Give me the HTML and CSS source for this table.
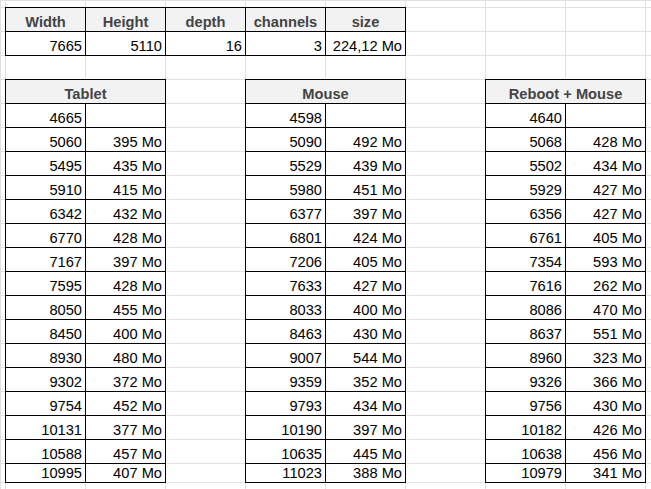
FILE: index.html
```html
<!DOCTYPE html>
<html>
<head>
<meta charset="utf-8">
<link rel="stylesheet" href="styles.css">
</head>
<body>
<table class="sheet">
<colgroup>
<col class="c-edge"><col class="c"><col class="c"><col class="c"><col class="c"><col class="c"><col class="c"><col class="c"><col class="c"><col class="c-rest">
</colgroup>
<tbody>
<tr class="r-top"><td></td><td></td><td></td><td></td><td></td><td></td><td></td><td></td><td></td><td></td></tr>
<tr><td></td><td class="b h">Width</td><td class="b h">Height</td><td class="b h">depth</td><td class="b h">channels</td><td class="b h">size</td><td></td><td></td><td></td><td></td></tr>
<tr><td></td><td class="b">7665</td><td class="b">5110</td><td class="b">16</td><td class="b">3</td><td class="b">224,12 Mo</td><td></td><td></td><td></td><td></td></tr>
<tr><td></td><td></td><td></td><td></td><td></td><td></td><td></td><td></td><td></td><td></td></tr>
<tr><td></td><td class="b h" colspan="2">Tablet</td><td></td><td class="b h" colspan="2">Mouse</td><td></td><td class="b h" colspan="2">Reboot + Mouse</td><td></td></tr>
<tr><td></td><td class="b">4665</td><td class="b"></td><td></td><td class="b">4598</td><td class="b"></td><td></td><td class="b">4640</td><td class="b"></td><td></td></tr>
<tr><td></td><td class="b">5060</td><td class="b">395 Mo</td><td></td><td class="b">5090</td><td class="b">492 Mo</td><td></td><td class="b">5068</td><td class="b">428 Mo</td><td></td></tr>
<tr><td></td><td class="b">5495</td><td class="b">435 Mo</td><td></td><td class="b">5529</td><td class="b">439 Mo</td><td></td><td class="b">5502</td><td class="b">434 Mo</td><td></td></tr>
<tr><td></td><td class="b">5910</td><td class="b">415 Mo</td><td></td><td class="b">5980</td><td class="b">451 Mo</td><td></td><td class="b">5929</td><td class="b">427 Mo</td><td></td></tr>
<tr><td></td><td class="b">6342</td><td class="b">432 Mo</td><td></td><td class="b">6377</td><td class="b">397 Mo</td><td></td><td class="b">6356</td><td class="b">427 Mo</td><td></td></tr>
<tr><td></td><td class="b">6770</td><td class="b">428 Mo</td><td></td><td class="b">6801</td><td class="b">424 Mo</td><td></td><td class="b">6761</td><td class="b">405 Mo</td><td></td></tr>
<tr><td></td><td class="b">7167</td><td class="b">397 Mo</td><td></td><td class="b">7206</td><td class="b">405 Mo</td><td></td><td class="b">7354</td><td class="b">593 Mo</td><td></td></tr>
<tr><td></td><td class="b">7595</td><td class="b">428 Mo</td><td></td><td class="b">7633</td><td class="b">427 Mo</td><td></td><td class="b">7616</td><td class="b">262 Mo</td><td></td></tr>
<tr><td></td><td class="b">8050</td><td class="b">455 Mo</td><td></td><td class="b">8033</td><td class="b">400 Mo</td><td></td><td class="b">8086</td><td class="b">470 Mo</td><td></td></tr>
<tr><td></td><td class="b">8450</td><td class="b">400 Mo</td><td></td><td class="b">8463</td><td class="b">430 Mo</td><td></td><td class="b">8637</td><td class="b">551 Mo</td><td></td></tr>
<tr><td></td><td class="b">8930</td><td class="b">480 Mo</td><td></td><td class="b">9007</td><td class="b">544 Mo</td><td></td><td class="b">8960</td><td class="b">323 Mo</td><td></td></tr>
<tr><td></td><td class="b">9302</td><td class="b">372 Mo</td><td></td><td class="b">9359</td><td class="b">352 Mo</td><td></td><td class="b">9326</td><td class="b">366 Mo</td><td></td></tr>
<tr><td></td><td class="b">9754</td><td class="b">452 Mo</td><td></td><td class="b">9793</td><td class="b">434 Mo</td><td></td><td class="b">9756</td><td class="b">430 Mo</td><td></td></tr>
<tr><td></td><td class="b">10131</td><td class="b">377 Mo</td><td></td><td class="b">10190</td><td class="b">397 Mo</td><td></td><td class="b">10182</td><td class="b">426 Mo</td><td></td></tr>
<tr><td></td><td class="b">10588</td><td class="b">457 Mo</td><td></td><td class="b">10635</td><td class="b">445 Mo</td><td></td><td class="b">10638</td><td class="b">456 Mo</td><td></td></tr>
<tr class="r-short"><td></td><td class="b">10995</td><td class="b">407 Mo</td><td></td><td class="b">11023</td><td class="b">388 Mo</td><td></td><td class="b">10979</td><td class="b">341 Mo</td><td></td></tr>
<tr><td></td><td></td><td></td><td></td><td></td><td></td><td></td><td></td><td></td><td></td></tr>
</tbody>
</table>
</body>
</html>
```
FILE: styles.css
```css
html, body {
  margin: 0;
  padding: 0;
  background: #fff;
  overflow: hidden;
}
.sheet {
  border-collapse: collapse;
  table-layout: fixed;
  width: 671px;
  font-family: "Liberation Sans Narrow", "Arial Narrow", "Liberation Sans", sans-serif;
  font-size: 14.67px;
  color: #000;
}
.c-edge { width: 5px; }
.c { width: 80px; }
.c-rest { width: 26px; }
.sheet tr { height: 24px; }
.sheet tr.r-top { height: 7px; }
.sheet tr.r-short { height: 19px; }
.sheet td {
  border: 1px solid #e1e1e1;
  padding: 0 3px 0 3px;
  text-align: right;
  vertical-align: bottom;
  white-space: nowrap;
  overflow: hidden;
  line-height: 17px;
}
.sheet td.b {
  border: 1px double #000;
}
.sheet td.h {
  background: #f2f2f2;
  color: #444;
  font-weight: bold;
  text-align: center;
}
```
